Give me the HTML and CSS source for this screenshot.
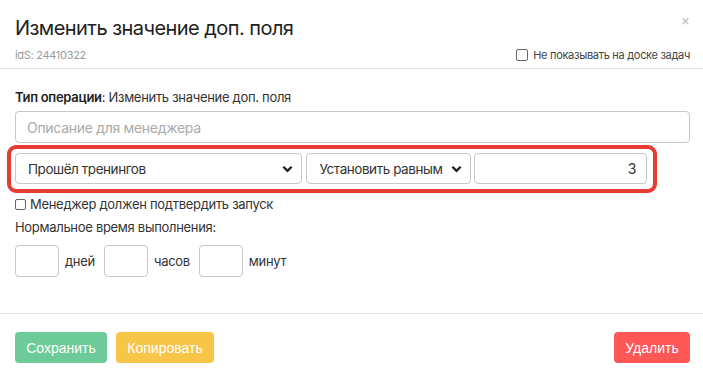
FILE: index.html
```html
<!DOCTYPE html>
<html lang="ru">
<head>
<meta charset="utf-8">
<link rel="stylesheet" href="styles.css">
</head>
<body>
<div class="modal">
  <div class="header">
    <div class="title-row">
      <h2 class="title">Изменить значение доп. поля</h2>
      <span class="close">&times;</span>
    </div>
    <div class="sub-row">
      <span class="ids">idS: 24410322</span>
      <label class="hide-label"><span class="cb"></span>Не показывать на доске задач</label>
    </div>
  </div>
  <div class="body">
    <div class="op"><b>Тип операции</b>: Изменить значение доп. поля</div>
    <div class="desc">Описание для менеджера</div>
    <div class="highlight">
      <div class="select sel1"><span>Прошёл тренингов</span><svg class="chev" viewBox="0 0 12 8" width="11" height="8"><path d="M1.5 1.5 L6 6 L10.5 1.5" fill="none" stroke="#1a1a1a" stroke-width="2.4"/></svg></div>
      <div class="select sel2"><span>Установить равным</span><svg class="chev" viewBox="0 0 12 8" width="11" height="8"><path d="M1.5 1.5 L6 6 L10.5 1.5" fill="none" stroke="#1a1a1a" stroke-width="2.4"/></svg></div>
      <div class="value">3</div>
    </div>
    <label class="confirm"><span class="cb"></span>Менеджер должен подтвердить запуск</label>
    <div class="norm">Нормальное время выполнения:</div>
    <div class="times">
      <div class="tbox"></div><span class="unit">дней</span>
      <div class="tbox"></div><span class="unit">часов</span>
      <div class="tbox"></div><span class="unit">минут</span>
    </div>
  </div>
  <div class="footer">
    <button class="btn save">Сохранить</button>
    <button class="btn copy">Копировать</button>
    <span class="spacer"></span>
    <button class="btn del">Удалить</button>
  </div>
</div>
</body>
</html>
```
FILE: styles.css
```css
* { box-sizing: border-box; }
html, body { margin: 0; padding: 0; background: #fff; }
body { font-family: Inter, "Noto Sans", sans-serif; color: #333; width: 703px; height: 380px; overflow: hidden; letter-spacing: -0.3px; }
.modal { width: 703px; }
.header { padding: 15px 13px 0 15px; height: 69px; border-bottom: 1px solid #e5e5e5; }
.title-row { display: flex; justify-content: space-between; align-items: flex-start; height: 27px; }
.title { margin: 0; font-size: 20px; font-weight: 400; color: #222; line-height: 26px; letter-spacing: -0.55px; }
.close { font-size: 14px; color: #bbb; line-height: 16px; letter-spacing: 0; margin-top: -3px; }
.sub-row { display: flex; justify-content: space-between; align-items: center; height: 26px; }
.ids { font-size: 11px; color: #999; }
.hide-label { display: flex; align-items: center; font-size: 11px; color: #444; }
.cb { display: inline-block; width: 12px; height: 12px; border: 1px solid #666; border-radius: 2px; margin-right: 5px; background: #fff; }
.body { padding: 19px 13px 0 15px; height: 245px; border-bottom: 1px solid #e5e5e5; }
.op { font-size: 13px; color: #333; line-height: 18px; }
.op b { font-weight: 600; color: #222; }
.desc { margin-top: 5px; height: 32px; border: 1px solid #c6c6cc; border-radius: 4px; padding: 0 11px; display: flex; align-items: center; font-size: 14px; color: #aaa; }
.highlight { display: flex; margin: 2px 0 0 -8px; width: 650px; border: 4px solid #e53b33; border-radius: 9px; padding: 4px 6px 5px 4px; gap: 3px; }
.select { height: 31px; border: 1px solid #c6c6cc; border-radius: 4px; display: flex; align-items: center; justify-content: space-between; padding: 0 8px 0 12px; font-size: 13.5px; letter-spacing: -0.45px; color: #333; }
.sel1 { width: 287px; margin-right: 1px; }
.sel2 { width: 166px; padding-left: 13px; }
.chev { margin-top: 1px; }
.value { width: 173px; height: 31px; border: 1px solid #c6c6cc; border-radius: 4px; display: flex; align-items: center; justify-content: flex-end; padding: 0 10px; font-size: 14px; color: #333; }
.confirm { display: flex; align-items: center; margin-top: 2px; font-size: 13px; color: #333; line-height: 18px; }
.confirm .cb { width: 11px; height: 11px; margin-right: 4px; }
.norm { margin-top: 5px; font-size: 13px; color: #333; line-height: 18px; }
.times { display: flex; align-items: center; margin-top: 9px; }
.tbox { width: 44px; height: 32px; border: 1px solid #c6c6cc; border-radius: 4px; }
.unit { font-size: 13px; color: #333; margin: 0 9px 0 6px; }
.footer { display: flex; align-items: flex-start; padding: 18px 13px 0 15px; }
.spacer { flex: 1; }
.btn { border: none; border-radius: 4px; height: 31px; padding: 0 10px; font-family: "Liberation Sans", Arial, sans-serif; font-size: 14px; color: #fff; letter-spacing: 0; }
.save { background: #6ccb98; width: 92px; }
.copy { background: #f7c548; width: 98px; margin-left: 9px; }
.del { background: #ff5656; width: 76px; }
```
